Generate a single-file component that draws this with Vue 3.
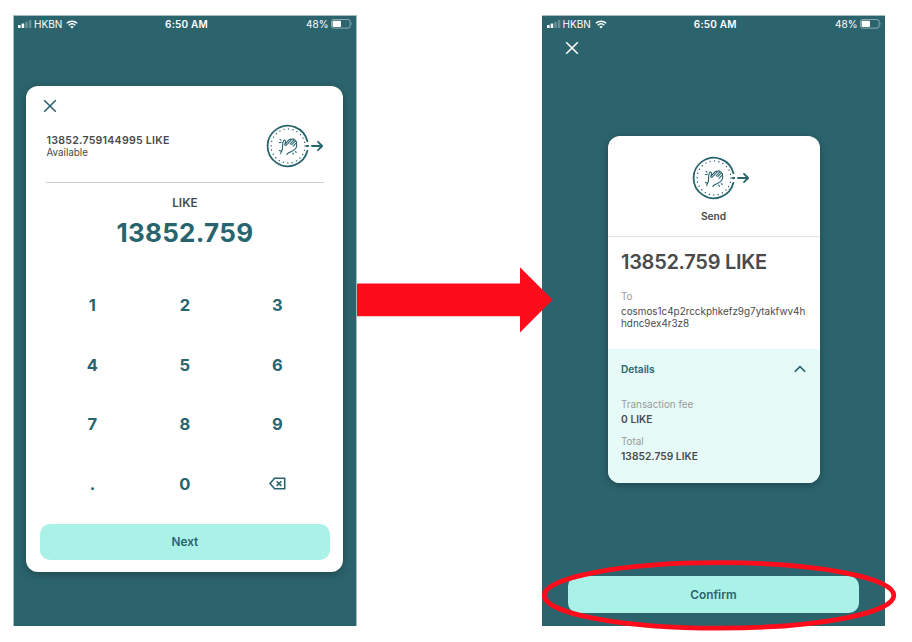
<script setup>
import { h } from 'vue'

const keys = ['1', '2', '3', '4', '5', '6', '7', '8', '9', '.', '0', 'del']

const StatusBar = () =>
  h('div', { class: 'status' }, [
    h('svg', { class: 'signal', width: 14, height: 8, viewBox: '0 0 14 8' }, [
      h('rect', { x: 0, y: 5, width: 2.6, height: 3, rx: 0.6, fill: '#fff' }),
      h('rect', { x: 3.6, y: 3.4, width: 2.6, height: 4.6, rx: 0.6, fill: '#fff' }),
      h('rect', { x: 7.2, y: 1.7, width: 2.6, height: 6.3, rx: 0.6, fill: '#fff', opacity: 0.28 }),
      h('rect', { x: 10.8, y: 0, width: 2.6, height: 8, rx: 0.6, fill: '#fff', opacity: 0.28 })
    ]),
    h('span', { class: 'carrier' }, 'HKBN'),
    h('svg', { class: 'wifi', width: 12, height: 9, viewBox: '0 0 12 9' }, [
      h('path', { d: 'M0.8 3.3C3.8 0.5 8.2 0.5 11.2 3.3M2.7 5.3C4.7 3.5 7.3 3.5 9.3 5.3', fill: 'none', stroke: '#fff', 'stroke-width': 1.5 }),
      h('path', { d: 'M4.2 6.7C5.3 5.8 6.7 5.8 7.8 6.7L6 8.6Z', fill: '#fff' })
    ]),
    h('span', { class: 'time' }, '6:50 AM'),
    h('span', { class: 'percent' }, '48%'),
    h('svg', { class: 'battery', width: 22, height: 10, viewBox: '0 0 22 10' }, [
      h('rect', { x: 0.5, y: 0.5, width: 18.6, height: 8.6, rx: 2, fill: 'none', stroke: '#fff', 'stroke-opacity': 0.45 }),
      h('rect', { x: 1.6, y: 1.7, width: 8.4, height: 6.2, rx: 0.8, fill: '#fff' }),
      h('path', { d: 'M20.2 3.3Q21.4 4.8 20.2 6.3Z', fill: '#fff', opacity: 0.45 })
    ])
  ])

const SendIcon = () =>
  h('svg', { class: 'send-icon', width: 58, height: 44, viewBox: '0 0 58 44', fill: 'none', stroke: '#28646e', 'stroke-linecap': 'round', 'stroke-linejoin': 'round' }, [
    h('path', { d: 'M41.4 17.2A20.2 20.2 0 1 0 41.4 26.8', 'stroke-width': 1.8 }),
    h('circle', { cx: 22, cy: 22, r: 17, 'stroke-width': 1.4, 'stroke-dasharray': '0.01 4.44' }),
    h('path', { d: 'M40.6 22H42.2M46 22H56.2M52 17.8L56.2 22L52 26.2', 'stroke-width': 1.8 }),
    h('path', {
      d: 'M15.6 27.4C17.8 24.8 15.2 21 17.6 16.6C18.7 15.3 20 16.7 19.3 18.7L18.7 20.8M19 20L23.6 15.4C24.7 14.7 25.5 15.5 24.7 16.5L22.1 19.4M24.7 16.2L26.3 15C27.5 14.4 28.2 15.5 27.4 16.4L24.2 20M27.5 16.2C28.8 15.2 29.7 16.3 28.9 17.3L25.8 20.7M29 17.4C30.5 16.8 30.9 18 30.2 19L27.3 22.2M30.5 18.9C31.2 22.4 29.7 25.7 26.3 27.1C23.9 28.2 22.1 28.6 20.8 30.4M18.8 20.9C20 21.8 20.8 21 21.3 20.1M14 15.3L14.9 16.1M13.2 18.7L15.4 18.2M13.5 26.4L15.4 27.3L14.7 29.6M26.7 29.2L27.4 30.1M29.3 27.7L30.3 28.3',
      'stroke-width': 1.1
    })
  ])
</script>

<template>
  <main class="stage">
    <section class="phone phone-left">
      <StatusBar />
      <div class="amount-card">
        <svg class="close" width="14" height="14" viewBox="0 0 14 14"><path d="M1.2 1.2L12.8 12.8M12.8 1.2L1.2 12.8" /></svg>
        <div class="balance">
          <div class="balance-text">
            <strong>13852.759144995 LIKE</strong>
            <span>Available</span>
          </div>
          <SendIcon />
        </div>
        <div class="unit">LIKE</div>
        <div class="value">13852.759</div>
        <div class="keypad">
          <div v-for="k in keys" :key="k" class="key">
            <svg v-if="k === 'del'" width="17" height="13" viewBox="0 0 17 13" fill="none" stroke="#28646e" stroke-width="1.6">
              <path d="M5.6 1.2H15.7V11.8H5.6L1 6.5Z" />
              <path d="M7.7 4.2L12.4 8.9M12.4 4.2L7.7 8.9" />
            </svg>
            <span v-else>{{ k }}</span>
          </div>
        </div>
        <button class="action">Next</button>
      </div>
    </section>

    <section class="phone phone-right">
      <StatusBar />
      <svg class="close close-light" width="14" height="14" viewBox="0 0 14 14"><path d="M1.2 1.2L12.8 12.8M12.8 1.2L1.2 12.8" /></svg>
      <div class="review-card">
        <div class="review-head">
          <SendIcon />
          <span>Send</span>
        </div>
        <div class="review-body">
          <div class="total">13852.759 LIKE</div>
          <div class="label">To</div>
          <div class="address">cosmos1c4p2rcckphkefz9g7ytakfwv4h<br />hdnc9ex4r3z8</div>
        </div>
        <div class="details">
          <div class="details-head">
            <span>Details</span>
            <svg width="12" height="8" viewBox="0 0 12 8" fill="none" stroke="#28646e" stroke-width="1.6"><path d="M0.9 6.6L6 1.7L11.1 6.6" /></svg>
          </div>
          <div class="label fee">Transaction fee</div>
          <div class="figure">0 LIKE</div>
          <div class="label sum">Total</div>
          <div class="figure">13852.759 LIKE</div>
        </div>
      </div>
      <button class="action confirm">Confirm</button>
    </section>

    <svg class="marks" width="912" height="642" viewBox="0 0 912 642">
      <path d="M357 283.4H520V267.3L552.6 299.8L520 332.4V316.3H357Z" fill="#fd0d1b" />
      <ellipse cx="719" cy="595.4" rx="174.8" ry="32.7" fill="none" stroke="#fd0d1b" stroke-width="4.8" />
    </svg>
  </main>
</template>

<style>
body { background: #fff; }
</style>

<style scoped>
.stage {
  position: relative;
  width: 912px;
  height: 642px;
  box-sizing: border-box;
  padding: 15px 0 0 13px;
  display: flex;
  gap: 185px;
  overflow: hidden;
  font-family: Inter, "Liberation Sans", sans-serif;
  color: #4a4a4a;
}
.phone {
  height: 611px;
  box-sizing: border-box;
  background: #2c646e;
  border-top: 1px solid #a3bcc0;
}
.phone-left {
  width: 344px;
  border-left: 1px solid #a3bcc0;
  border-right: 1px solid #a3bcc0;
}
.phone-right { width: 343px; }
.stage :deep(.status) {
  display: grid;
  grid-template-columns: 16px 32px 12px 1fr 36px 22px;
  align-items: center;
  height: 16px;
  padding: 0 3px 0 4px;
  color: #fff;
  font-size: 10px;
  line-height: 16px;
  white-space: nowrap;
}
.phone-right :deep(.status) { padding-left: 4.5px; }
.stage :deep(.time) { font-weight: 600; letter-spacing: 0.2px; text-align: center; }
.stage :deep(.percent) { text-align: right; padding-right: 2.5px; }
.stage :deep(.send-icon) { display: block; }
.close { display: block; fill: none; stroke: #28646e; stroke-width: 1.6; }
.close-light { stroke: #fff; margin: 9.4px 0 0 23px; }

.amount-card {
  width: 317px;
  height: 486px;
  margin: 54px 0 0 12.4px;
  padding: 13px 13.5px 0;
  box-sizing: border-box;
  background: #fff;
  border-radius: 12px;
  box-shadow: 0 2px 8px rgba(0, 0, 0, 0.3);
}
.amount-card .close { margin-left: 3.4px; }
.balance {
  display: flex;
  justify-content: space-between;
  align-items: flex-start;
  margin: 11px 6px 0;
  height: 58px;
  border-bottom: 1px solid #cfcfd4;
}
.balance-text { display: flex; flex-direction: column; padding: 10px 0 0 0.6px; }
.balance-text strong { font-size: 10.6px; line-height: 13px; font-weight: 600; letter-spacing: 0.25px; }
.balance-text span { font-size: 9.8px; line-height: 12px; }
.unit { margin-top: 13px; text-align: center; font-size: 11.8px; line-height: 14px; font-weight: 600; }
.value { margin-top: 7px; text-align: center; font-size: 26px; line-height: 32px; font-weight: 700; letter-spacing: 0.3px; color: #28646e; }
.keypad {
  display: grid;
  grid-template-columns: repeat(3, 92.5px);
  grid-auto-rows: 59.7px;
  justify-content: center;
  margin-top: 26px;
}
.key {
  display: flex;
  align-items: center;
  justify-content: center;
  font-size: 16.5px;
  font-weight: 700;
  color: #28646e;
}
.action {
  display: block;
  width: 290px;
  height: 36px;
  margin-top: 10px;
  padding: 0;
  border: 0;
  border-radius: 10px;
  background: #aaf1e7;
  color: #28646e;
  font: 600 11.8px/36px Inter, "Liberation Sans", sans-serif;
}
.review-card {
  width: 212px;
  height: 347px;
  margin: 80.5px 0 0 65.5px;
  background: #fff;
  border-radius: 12px;
  overflow: hidden;
  box-shadow: 0 2px 8px rgba(0, 0, 0, 0.3);
}
.review-head {
  height: 101px;
  padding-top: 20px;
  box-sizing: border-box;
  display: flex;
  flex-direction: column;
  align-items: center;
  border-bottom: 1px solid #e0e0e0;
  font-size: 10.2px;
  line-height: 14px;
  font-weight: 600;
}
.review-head :deep(.send-icon) { margin: 0 -14px 9.5px 0; }
.review-body { height: 112px; padding: 12px 13.5px 0; box-sizing: border-box; }
.total { font-size: 20px; line-height: 26px; font-weight: 600; letter-spacing: -0.28px; }
.label { font-size: 9.9px; line-height: 12px; color: #9b9b9b; }
.review-body .label { margin-top: 15px; }
.address { margin-top: 3px; font-size: 9.9px; line-height: 12px; white-space: nowrap; }
.details { height: 134px; padding: 13px 13.5px 0; box-sizing: border-box; background: #e6faf7; }
.details-head {
  display: flex;
  align-items: center;
  justify-content: space-between;
  height: 14px;
  color: #28646e;
  font-size: 10.1px;
  font-weight: 600;
}
.fee { margin-top: 22.5px; }
.figure { margin-top: 3px; font-size: 10.2px; line-height: 12px; font-weight: 600; letter-spacing: 0.05px; }
.sum { margin-top: 10px; }
.confirm { width: 291px; height: 37px; margin: 93px 0 0 26px; line-height: 38px; }
.marks { position: absolute; left: 0; top: 0; pointer-events: none; }
</style>
